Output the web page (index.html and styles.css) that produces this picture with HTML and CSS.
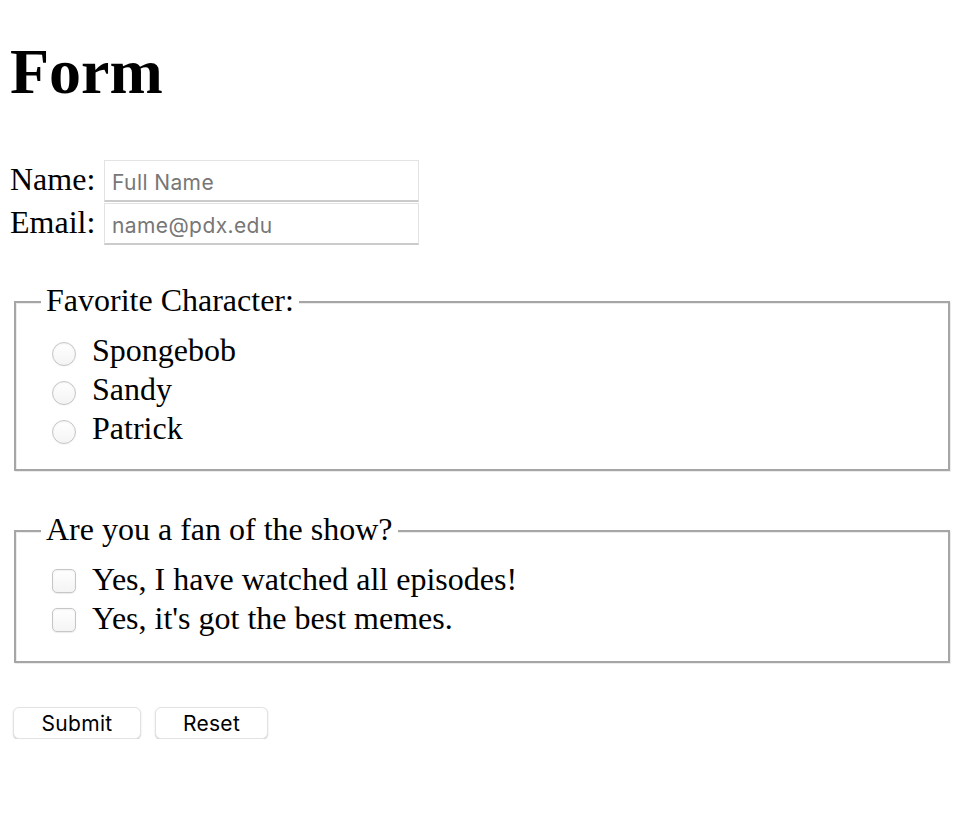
FILE: index.html
```
<!DOCTYPE html>
<html lang="en">
<head>
<meta charset="utf-8">
<title>Form</title>
<link rel="stylesheet" href="styles.css">
</head>
<body>
<div class="page">
  <h1 class="title">Form</h1>
  <form class="form">
    <div class="field">
      <label class="field-label" for="name">Name:</label>
      <input class="text-input" id="name" type="text" placeholder="Full Name">
    </div>
    <div class="field">
      <label class="field-label" for="email">Email:</label>
      <input class="text-input" id="email" type="email" placeholder="name@pdx.edu">
    </div>

    <fieldset class="group group--radio">
      <legend class="group-legend">Favorite Character:</legend>
      <label class="option"><input class="choice choice--radio" type="radio" name="character"><span class="option-text">Spongebob</span></label>
      <label class="option"><input class="choice choice--radio" type="radio" name="character"><span class="option-text">Sandy</span></label>
      <label class="option"><input class="choice choice--radio" type="radio" name="character"><span class="option-text">Patrick</span></label>
    </fieldset>

    <fieldset class="group group--check">
      <legend class="group-legend">Are you a fan of the show?</legend>
      <label class="option"><input class="choice choice--check" type="checkbox"><span class="option-text">Yes, I have watched all episodes!</span></label>
      <label class="option"><input class="choice choice--check" type="checkbox"><span class="option-text">Yes, it's got the best memes.</span></label>
    </fieldset>

    <div class="actions">
      <button class="btn btn--submit" type="submit">Submit</button>
      <button class="btn btn--reset" type="reset">Reset</button>
    </div>
  </form>
</div>
</body>
</html>
```
FILE: styles.css
```
body {
  margin: 0;
  background: #fff;
  color: #000;
  font-family: "Liberation Serif", "Times New Roman", serif;
  font-size: 32px;
}

.page {
  padding: 0 10px;
}

.title {
  margin: 35px 0 0;
  font-size: 64px;
  line-height: 74px;
  font-weight: bold;
}

.form {
  margin: 51px 0 0;
}

.field {
  display: flex;
  height: 42px;
}

.field + .field {
  margin-top: 1px;
}

.field-label {
  width: 94px;
  line-height: 38px;
}

.text-input {
  box-sizing: border-box;
  width: 315px;
  height: 42px;
  margin: 0;
  padding: 3px 7px 0;
  border: 1px solid #e3e3e3;
  border-bottom: 2px solid #cbcbcb;
  background: #fff;
  color: #000;
  font-family: Inter, "Liberation Sans", sans-serif;
  font-size: 21px;
  letter-spacing: 0.4px;
  outline: none;
}

.text-input::placeholder {
  color: #777;
}

.group {
  min-width: 0;
  margin: 39px 2px 0 4px;
  padding: 11px 0 21px 25px;
  border: 2px solid #a6a6a6;
  box-shadow: inset 1px 1px 0 #ececec, 1px 1px 0 #ececec;
}

.group--check {
  margin-top: 42px;
  padding-bottom: 23px;
}

.group-legend {
  padding: 0 5px 4px;
  line-height: 32px;
  background: #fff;
}

.option {
  display: flex;
  height: 39px;
  padding-left: 11px;
}

.option-text {
  line-height: 39px;
}

.choice {
  appearance: none;
  -webkit-appearance: none;
  box-sizing: border-box;
  flex: none;
  width: 24px;
  height: 24px;
  margin: 11px 16px 0 0;
  border: 1px solid #c6c6c6;
  background: linear-gradient(#fff, #f4f4f4);
  box-shadow: inset 0 1px 2px rgba(0, 0, 0, 0.06), 0 0.5px 1px rgba(0, 0, 0, 0.08);
}

.choice--radio {
  border-radius: 50%;
}

.choice--check {
  margin-top: 9px;
  border-radius: 5px;
}

.actions {
  display: flex;
  gap: 14px;
  margin-top: 44px;
  padding-left: 3px;
}

.btn {
  box-sizing: border-box;
  height: 32px;
  margin: 0;
  padding: 0;
  border: 1px solid #e2e2e2;
  border-radius: 6px;
  background: #fff;
  color: #000;
  font-family: Inter, "Liberation Sans", sans-serif;
  font-size: 21px;
  letter-spacing: 0.3px;
  box-shadow: 0 1px 1.5px rgba(0, 0, 0, 0.2);
}

.btn--submit {
  width: 128px;
}

.btn--reset {
  width: 113px;
}
```
